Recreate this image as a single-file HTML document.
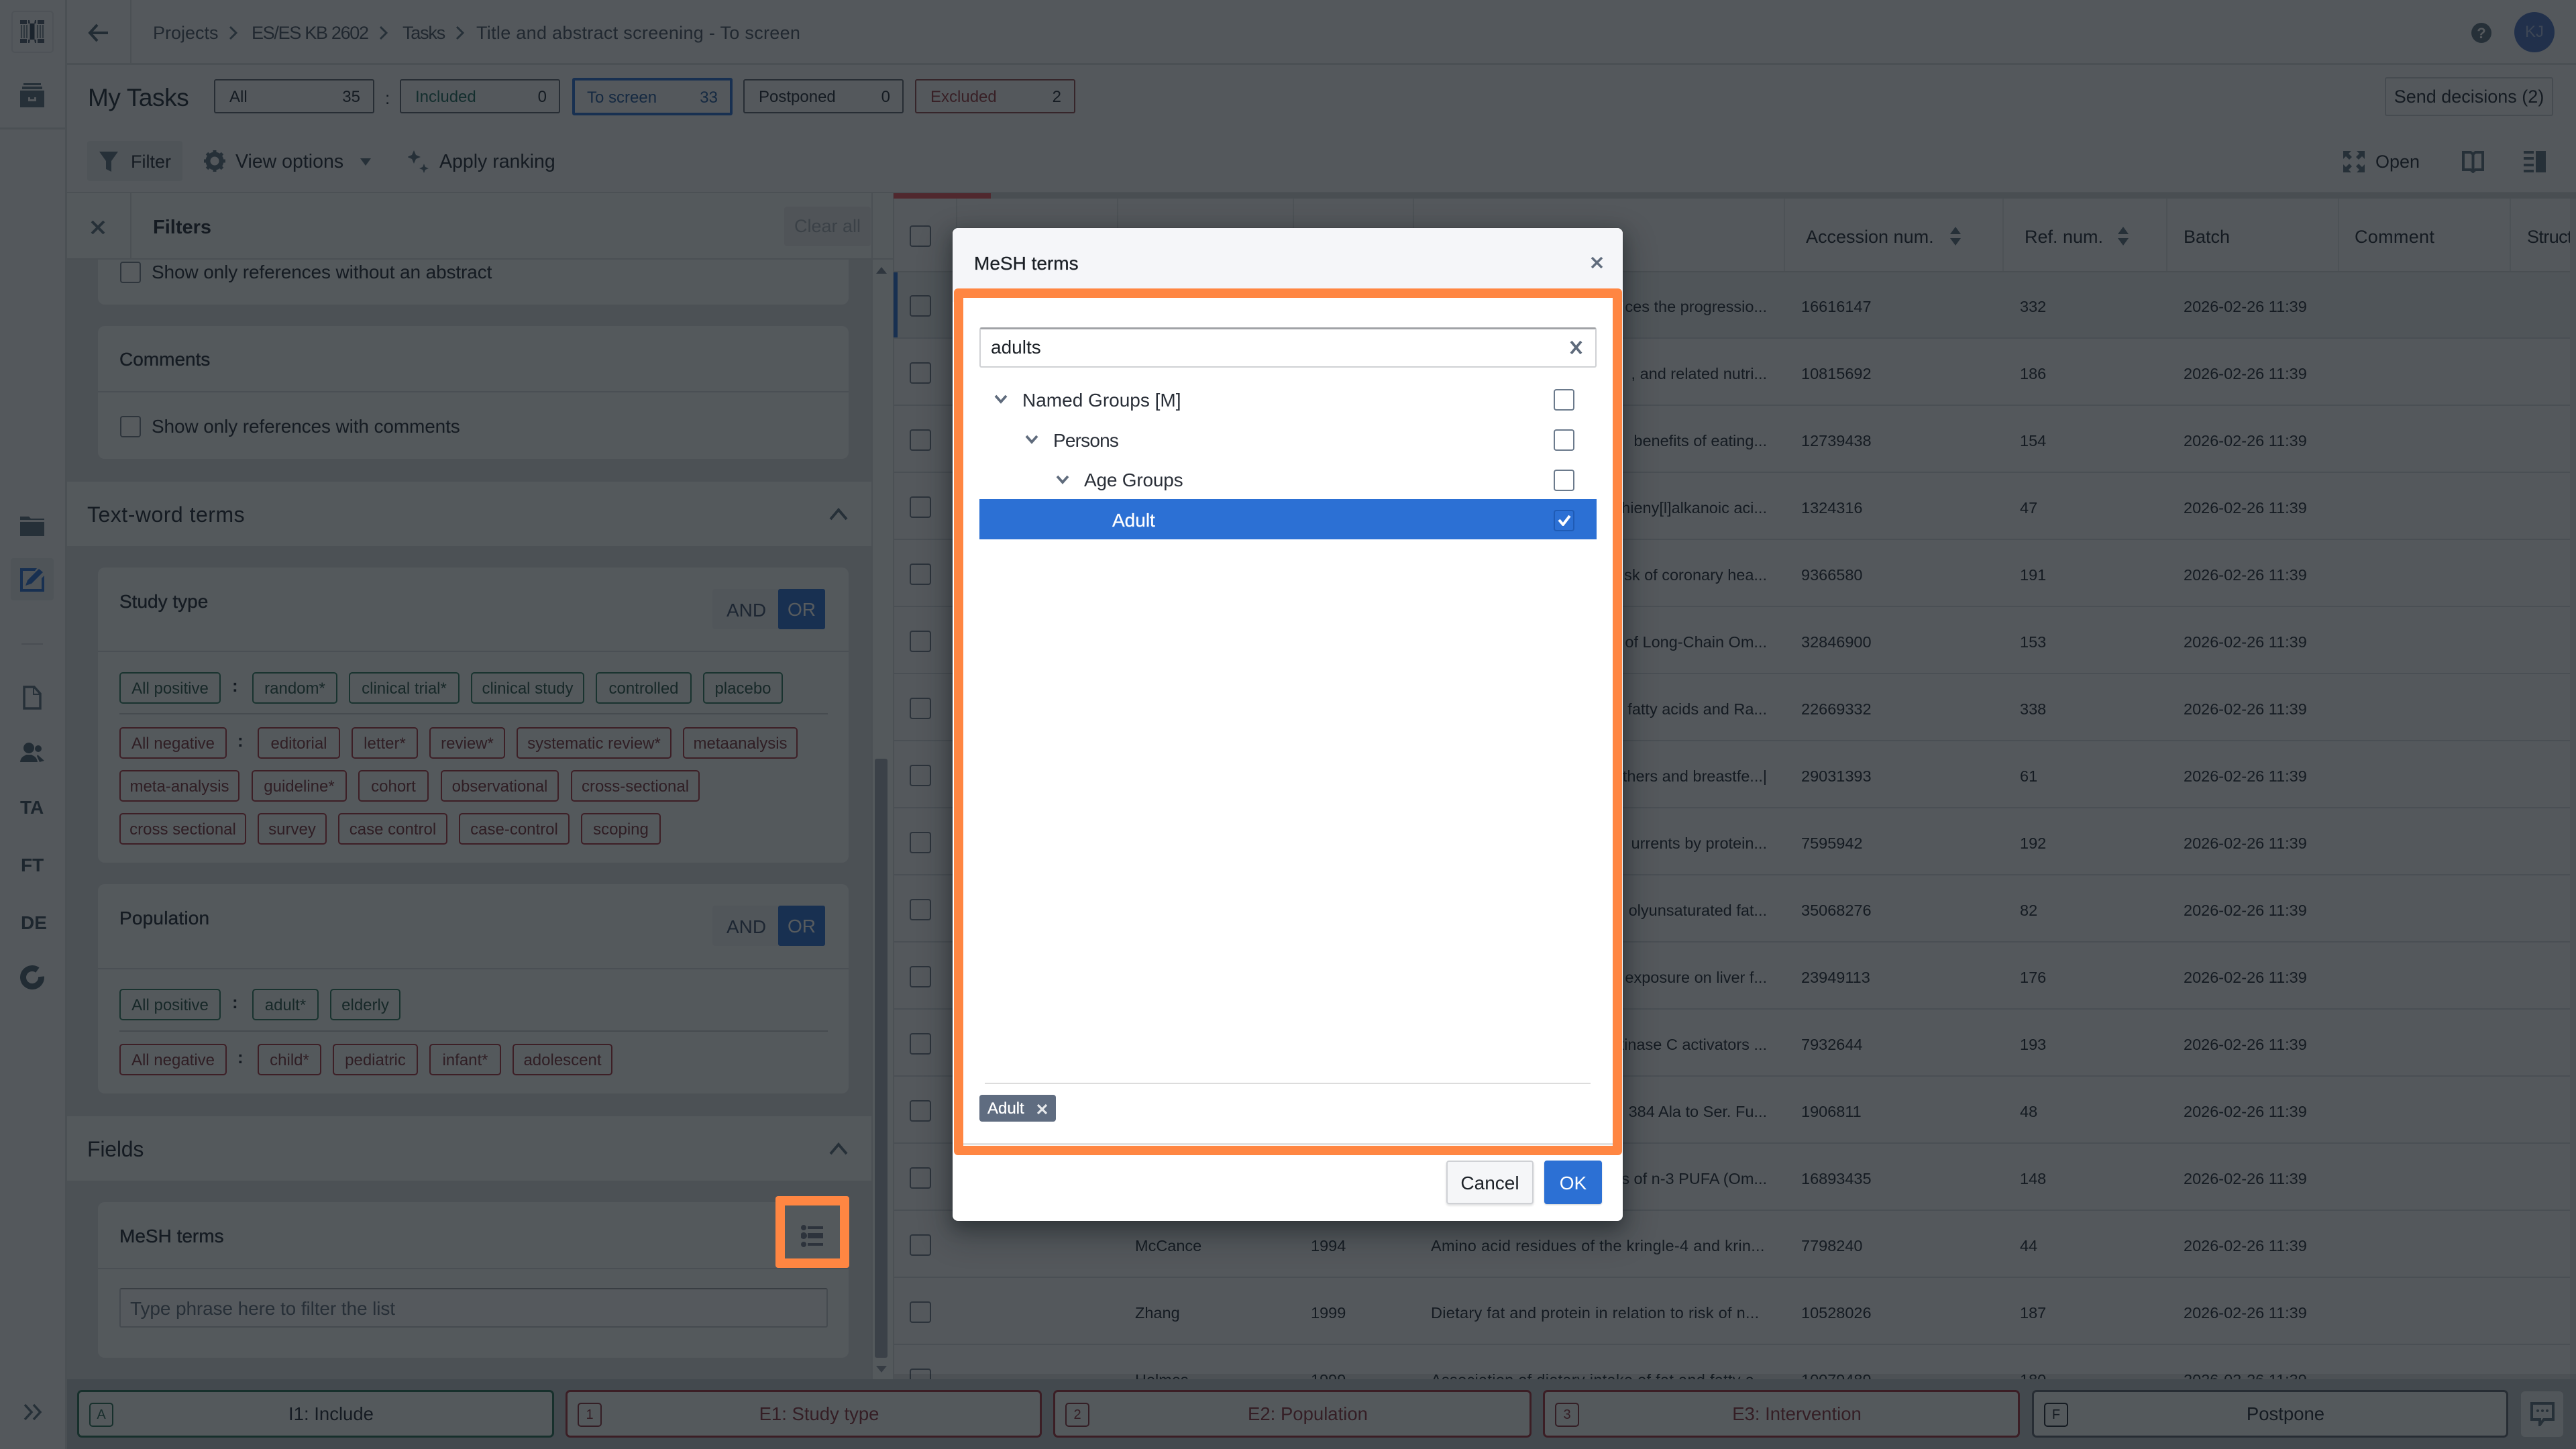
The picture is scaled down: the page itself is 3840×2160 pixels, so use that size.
<!DOCTYPE html>
<html lang="en"><head><meta charset="utf-8"><title>MeSH terms</title>
<style>
html,body{margin:0;padding:0;width:3840px;height:2160px;overflow:hidden;background:#f4f5f7}
*{box-sizing:border-box}
body{font-family:"Liberation Sans",Arial,sans-serif;color:#222b38;font-size:28px;position:relative}
.x,.t,.tag,.b,.cb,svg{position:absolute}
.t{white-space:nowrap;height:40px;line-height:40px}
.s{-webkit-text-stroke:.35px currentColor}
.tag{height:47px;margin-top:2px;line-height:45px;border:2px solid;border-radius:5px;text-align:center;font-size:24px;white-space:nowrap}
.p{border-color:#2f7a62;color:#2a544c}.n{border-color:#a83644;color:#78323e}
.cb{width:31px;height:32px;border:2px solid #6b7a8c;border-radius:4px;background:#fff}
.card{position:absolute;left:146px;width:1119px;background:#f6f7f9;border-radius:10px}
.line{position:absolute;background:#d4d7dc}
.tab{position:absolute;top:118px;height:51px;width:239px;border:2px solid #5f6672;border-radius:3px;font-size:24px;line-height:50px}
.tab span{position:absolute}
.r{position:absolute;left:1332px;width:2499px;height:100px;border-bottom:2px solid #d4d8dc;font-size:23.5px;line-height:104px;white-space:nowrap}
.r span{position:absolute;top:0}
.r i{position:absolute;left:24px;top:35px;width:32px;height:32px;border:2px solid #6f7a89;border-radius:4px}
.a{left:1353px}.f{left:1679px}.sn{right:1197px;text-align:right}.ti{left:801px;letter-spacing:.3px}.au{left:360px}.ye{left:622px}
.b{top:2072px;height:71px;border:3px solid;border-radius:7px;background:#f6f7f9;text-align:center;line-height:65px;font-size:27.5px;padding-left:46px}
.b u{position:absolute;text-decoration:none;left:15px;top:16px;width:36px;height:36px;border:2px solid;border-radius:5px;font-size:20px;line-height:32px;padding:0;text-align:center}
.th{position:absolute;top:296px;height:109px;width:2px;background:#dcdfe3}
.hd{font-size:27px}
</style></head><body>

<!-- app chrome -->
<div class="x" style="left:97px;top:0;width:3px;height:2160px;background:#d6d9de"></div>
<div class="x" style="left:97px;top:94px;width:3743px;height:3px;background:#d6d9de"></div>
<div class="x" style="left:194px;top:0;width:2px;height:95px;background:#d6d9de"></div>
<div class="x" style="left:0;top:190px;width:97px;height:3px;background:#d6d9de"></div>
<div class="x" style="left:17px;top:16px;width:63px;height:63px;border:2px solid #dfe2e6;border-radius:5px"></div>
<svg style="left:30px;top:29px" width="36" height="36" viewBox="0 0 36 36"><path d="M0 1h10v6H0zM26 1h10v6H26zM0 29h10v6H0zM26 29h10v6H26zM12 1h2l1 5h-3zM22 1h2v5h-3zM12 35h2l1-5h-3zM22 35h2v-5h-3z" fill="#4f5d6e"/><rect x="14.500" y="6" width="7" height="24" fill="#36465a"/><path d="M2 8v20M6 8v20M10 8v20M26 8v20M30 8v20M34 8v20" stroke="#7a8795" stroke-width="2.200"/></svg>
<svg style="left:30px;top:124px" width="36" height="36" viewBox="0 0 36 36" fill="#5c7080"><rect x="5" y="0" width="26" height="3"/><rect x="3" y="5" width="30" height="4"/><path d="M0 11h36v25H0zM12 21v6h12v-6h-3v3h-6v-3z"/></svg>
<svg style="left:30px;top:770px" width="36" height="29" viewBox="0 0 36 29" fill="#5c7080"><path d="M0 0h13l3 3h20v2H0zM0 8h36v21H0z"/></svg>
<div class="x" style="left:16px;top:832px;width:64px;height:63px;background:#e4e7ec;border-radius:4px"></div>
<svg style="left:30px;top:846px" width="36" height="36" viewBox="0 0 36 36"><path d="M0 1h25l-3 4H4v27h28V16l4-4v24H0z" fill="#2c70d4"/><path d="M8 27l3-8L28 2l6 5-17 17z" fill="#2c70d4"/></svg>
<div class="x" style="left:32px;top:959px;width:32px;height:2px;background:#d0d4d9"></div>
<svg style="left:34px;top:1022px" width="28" height="36" viewBox="0 0 28 36" fill="none" stroke="#5c7080" stroke-width="3.500"><path d="M2 2h15l9 10v22H2z"/><path d="M16 2v11h10" stroke-width="2"/></svg>
<svg style="left:30px;top:1107px" width="36" height="29" viewBox="0 0 36 29" fill="#4f6273"><circle cx="13" cy="8" r="8"/><path d="M0 29c1-8 6-9 9-11h8c3 2 8 3 9 11z"/><circle cx="27" cy="9" r="5"/><path d="M26 18l10 9-7 2-4-9z"/></svg>
<div class="t" style="left:30px;top:1184px;font-size:28px;font-weight:700;color:#3f4f60">TA</div>
<div class="t" style="left:31px;top:1270px;font-size:28px;font-weight:700;color:#3f4f60">FT</div>
<div class="t" style="left:31px;top:1356px;font-size:28px;font-weight:700;color:#3f4f60">DE</div>
<svg style="left:30px;top:1439px" width="36" height="36" viewBox="0 0 36 36" fill="none"><circle cx="18" cy="18" r="13.500" stroke="#4f6273" stroke-width="9" stroke-dasharray="73 12" transform="rotate(-5 18 18)"/></svg>
<svg style="left:35px;top:2092px" width="28" height="26" viewBox="0 0 28 26" fill="none" stroke="#5c7080" stroke-width="3.500"><path d="M2 2l10 11L2 24M15 2l10 11-10 11"/></svg>

<!-- breadcrumbs -->
<svg style="left:131px;top:35px" width="30" height="28" viewBox="0 0 30 28" fill="none" stroke="#4f6273" stroke-width="4"><path d="M14 2L3 14l11 12M3 14h27"/></svg>
<div class="t" style="left:228px;top:29px;font-size:27px;color:#4a5666">Projects</div>
<div class="t" style="left:375px;top:29px;font-size:27px;color:#4a5666;letter-spacing:-1.300px">ES/ES KB 2602</div>
<div class="t" style="left:600px;top:29px;font-size:27px;color:#4a5666;letter-spacing:-1.200px">Tasks</div>
<div class="t" style="left:710px;top:29px;font-size:27px;color:#4a5666;letter-spacing:.3px">Title and abstract screening - To screen</div>
<svg style="left:341px;top:38px" width="14" height="22" viewBox="0 0 14 22" fill="none" stroke="#5c7080" stroke-width="3"><path d="M2 2l9 9-9 9"/></svg>
<svg style="left:565px;top:38px" width="14" height="22" viewBox="0 0 14 22" fill="none" stroke="#5c7080" stroke-width="3"><path d="M2 2l9 9-9 9"/></svg>
<svg style="left:679px;top:38px" width="14" height="22" viewBox="0 0 14 22" fill="none" stroke="#5c7080" stroke-width="3"><path d="M2 2l9 9-9 9"/></svg>
<svg style="left:3684px;top:34px" width="30" height="30" viewBox="0 0 30 30"><circle cx="15" cy="15" r="15" fill="#5c7080"/><text x="15" y="23" text-anchor="middle" font-size="22" font-weight="700" fill="#f4f5f7" font-family="Liberation Sans">?</text></svg>
<div class="x" style="left:3748px;top:18px;width:60px;height:60px;border-radius:50%;background:#4a6fc0;color:#a8bae0;font-size:24px;line-height:60px;text-align:center">KJ</div>

<!-- tabs -->
<div class="t" style="left:131px;top:126px;font-size:37px;letter-spacing:-.4px;color:#1f2836">My Tasks</div>
<div class="tab" style="left:319px"><span style="left:21px">All</span><span style="right:19px">35</span></div>
<div class="t" style="left:574px;top:126px;font-size:26px">:</div>
<div class="tab" style="left:596px;color:#1f6a60"><span style="left:21px">Included</span><span style="right:18px;color:#222b38">0</span></div>
<div class="tab" style="left:853px;top:116px;height:56px;border:4px solid #2c70d4;line-height:52px;color:#22589f"><span style="left:18px">To screen</span><span style="right:18px">33</span></div>
<div class="tab" style="left:1108px"><span style="left:21px">Postponed</span><span style="right:18px">0</span></div>
<div class="tab" style="left:1364px;border-color:#8f4a52;color:#963a45"><span style="left:21px">Excluded</span><span style="right:19px;color:#222b38">2</span></div>
<div class="x" style="left:3555px;top:115px;width:251px;height:58px;border:2px solid #c6cad0;border-radius:3px;font-size:27px;line-height:54px;text-align:center">Send decisions (2)</div>

<!-- toolbar -->
<div class="x" style="left:130px;top:210px;width:142px;height:60px;background:#e4e6ea;border-radius:4px"></div>
<svg style="left:148px;top:226px" width="28" height="30" viewBox="0 0 28 30" fill="#5c7080"><path d="M0 0h28L18 14v16l-8-4V14z"/></svg>
<div class="t" style="left:195px;top:221px;font-size:27px">Filter</div>
<svg style="left:304px;top:224px" width="32" height="32" viewBox="0 0 32 32"><circle cx="16" cy="16" r="10" fill="none" stroke="#5c7080" stroke-width="7"/><path d="M16 0v6M16 26v6M0 16h6M26 16h6M4.500 4.500l4 4M23.500 23.500l4 4M4.500 27.500l4-4M23.500 8.500l4-4" stroke="#5c7080" stroke-width="5"/></svg>
<div class="t" style="left:351px;top:221px;font-size:28.500px">View options</div>
<svg style="left:537px;top:236px" width="16" height="11" viewBox="0 0 16 11" fill="#5c7080"><path d="M0 0h16L8 11z"/></svg>
<svg style="left:608px;top:224px" width="32" height="34" viewBox="0 0 32 34" fill="#5c7080"><path d="M9 0l3 7 7 3-7 3-3 7-3-7-7-3 7-3zM24 20l2 5 5 2-5 2-2 5-2-5-5-2 5-2z"/></svg>
<div class="t" style="left:655px;top:221px;font-size:28.500px">Apply ranking</div>
<svg style="left:3493px;top:225px" width="32" height="32" viewBox="0 0 32 32" fill="#5c7080"><path d="M0 0h12L8 4l5 5-4 4-5-5-4 4zM32 0v12l-4-4-5 5-4-4 5-5-4-4zM0 32V20l4 4 5-5 4 4-5 5 4 4zM32 32H20l4-4-5-5 4-4 5 5 4-4z"/></svg>
<div class="t" style="left:3541px;top:221px;font-size:27px">Open</div>
<svg style="left:3670px;top:224px" width="33" height="34" viewBox="0 0 33 34" fill="none" stroke="#5c7080" stroke-width="4"><path d="M2 3h11l3.500 3 3.500-3h11v26H20l-3.500 3-3.500-3H2zM16.500 6v24"/></svg>
<svg style="left:3762px;top:225px" width="33" height="32" viewBox="0 0 33 32" fill="#5c7080"><rect x="18" y="0" width="15" height="32"/><rect x="0" y="0" width="15" height="4"/><rect x="0" y="9" width="15" height="4"/><rect x="0" y="19" width="15" height="4"/><rect x="0" y="28" width="15" height="4"/></svg>
<div class="x" style="left:97px;top:286px;width:3743px;height:2px;background:#d6d9de"></div>

<!-- left panel -->
<div class="x" style="left:100px;top:387px;width:1199px;height:1669px;background:#d9dce1"></div>
<div class="card" style="top:370px;height:84px;border-radius:0 0 10px 10px"></div>
<div class="x" style="left:100px;top:288px;width:1232px;height:99px;background:#f6f7f9;border-bottom:2px solid #d6d9de"></div>
<div class="x" style="left:194px;top:288px;width:2px;height:98px;background:#d6d9de"></div>
<svg style="left:135px;top:329px" width="22" height="20" viewBox="0 0 22 20" fill="none" stroke="#5c7080" stroke-width="4"><path d="M2 1l18 18M20 1L2 19"/></svg>
<div class="t" style="left:228px;top:319px;font-size:29px;font-weight:700">Filters</div>
<div class="x" style="left:1169px;top:308px;width:129px;height:59px;background:#e6e8eb;border-radius:4px;color:#a2a9b2;font-size:27px;line-height:59px;text-align:center">Clear all</div>

<div class="cb" style="left:179px;top:390px;border-color:#757f8c;background:#fff"></div>
<div class="t" style="left:226px;top:386px;letter-spacing:-.12px">Show only references without an abstract</div>

<div class="card" style="top:486px;height:198px"></div>
<div class="line" style="left:146px;top:583px;width:1119px;height:2px"></div>
<div class="t s" style="left:178px;top:516px">Comments</div>
<div class="cb" style="left:179px;top:620px;border-color:#757f8c"></div>
<div class="t" style="left:226px;top:616px;letter-spacing:-.12px">Show only references with comments</div>

<div class="x" style="left:100px;top:718px;width:1199px;height:96px;background:#f6f7f9"></div>
<div class="t" style="left:130px;top:747px;font-size:32px;letter-spacing:.5px">Text-word terms</div>
<svg style="left:1236px;top:756px" width="28" height="20" viewBox="0 0 28 20" fill="none" stroke="#5c7080" stroke-width="4"><path d="M2 18L14 4l12 14"/></svg>

<div class="card" style="top:846px;height:440px"></div>
<div class="t s" style="left:178px;top:877px">Study type</div>
<div class="x" style="left:1062px;top:878px;width:168px;height:60px;background:#eceef1;border-radius:4px"></div>
<div class="t" style="left:1083px;top:890px;color:#3f4f6c">AND</div>
<div class="x" style="left:1160px;top:878px;width:70px;height:60px;background:#2c70d4;border-radius:3px;color:#fff;line-height:62px;text-align:center">OR</div>
<div class="line" style="left:146px;top:970px;width:1119px;height:2px"></div>
<div class="tag p" style="left:178px;top:1000px;width:151px">All positive</div>
<div class="t" style="left:346px;top:1002px;font-size:26px;font-weight:700">:</div>
<div class="tag p" style="left:376px;top:1000px;width:127px">random*</div>
<div class="tag p" style="left:520px;top:1000px;width:165px">clinical trial*</div>
<div class="tag p" style="left:702px;top:1000px;width:169px">clinical study</div>
<div class="tag p" style="left:888px;top:1000px;width:143px">controlled</div>
<div class="tag p" style="left:1048px;top:1000px;width:119px">placebo</div>
<div class="line" style="left:178px;top:1063px;width:1056px;height:2px;background:#c6cace"></div>
<div class="tag n" style="left:178px;top:1082px;width:160px">All negative</div>
<div class="t" style="left:354px;top:1084px;font-size:26px;font-weight:700">:</div>
<div class="tag n" style="left:384px;top:1082px;width:123px">editorial</div>
<div class="tag n" style="left:524px;top:1082px;width:99px">letter*</div>
<div class="tag n" style="left:640px;top:1082px;width:113px">review*</div>
<div class="tag n" style="left:770px;top:1082px;width:231px">systematic review*</div>
<div class="tag n" style="left:1018px;top:1082px;width:171px">metaanalysis</div>
<div class="tag n" style="left:178px;top:1146px;width:179px">meta-analysis</div>
<div class="tag n" style="left:375px;top:1146px;width:142px">guideline*</div>
<div class="tag n" style="left:534px;top:1146px;width:105px">cohort</div>
<div class="tag n" style="left:657px;top:1146px;width:176px">observational</div>
<div class="tag n" style="left:851px;top:1146px;width:192px">cross-sectional</div>
<div class="tag n" style="left:178px;top:1210px;width:189px">cross sectional</div>
<div class="tag n" style="left:384px;top:1210px;width:103px">survey</div>
<div class="tag n" style="left:504px;top:1210px;width:163px">case control</div>
<div class="tag n" style="left:684px;top:1210px;width:165px">case-control</div>
<div class="tag n" style="left:866px;top:1210px;width:119px">scoping</div>

<div class="card" style="top:1318px;height:312px"></div>
<div class="t s" style="left:178px;top:1349px;letter-spacing:.2px">Population</div>
<div class="x" style="left:1062px;top:1350px;width:168px;height:60px;background:#eceef1;border-radius:4px"></div>
<div class="t" style="left:1083px;top:1362px;color:#3f4f6c">AND</div>
<div class="x" style="left:1160px;top:1350px;width:70px;height:60px;background:#2c70d4;border-radius:3px;color:#fff;line-height:62px;text-align:center">OR</div>
<div class="line" style="left:146px;top:1443px;width:1119px;height:2px"></div>
<div class="tag p" style="left:178px;top:1472px;width:151px">All positive</div>
<div class="t" style="left:346px;top:1474px;font-size:26px;font-weight:700">:</div>
<div class="tag p" style="left:376px;top:1472px;width:99px">adult*</div>
<div class="tag p" style="left:492px;top:1472px;width:105px">elderly</div>
<div class="line" style="left:178px;top:1536px;width:1056px;height:2px;background:#c6cace"></div>
<div class="tag n" style="left:178px;top:1554px;width:160px">All negative</div>
<div class="t" style="left:354px;top:1556px;font-size:26px;font-weight:700">:</div>
<div class="tag n" style="left:384px;top:1554px;width:95px">child*</div>
<div class="tag n" style="left:496px;top:1554px;width:127px">pediatric</div>
<div class="tag n" style="left:640px;top:1554px;width:107px">infant*</div>
<div class="tag n" style="left:764px;top:1554px;width:149px">adolescent</div>

<div class="x" style="left:100px;top:1664px;width:1199px;height:96px;background:#f6f7f9"></div>
<div class="t" style="left:130px;top:1693px;font-size:32px;letter-spacing:-.2px">Fields</div>
<svg style="left:1236px;top:1702px" width="28" height="20" viewBox="0 0 28 20" fill="none" stroke="#5c7080" stroke-width="4"><path d="M2 18L14 4l12 14"/></svg>

<div class="card" style="top:1792px;height:232px"></div>
<div class="t s" style="left:178px;top:1823px">MeSH terms</div>
<div class="line" style="left:146px;top:1890px;width:1119px;height:2px"></div>
<div class="x" style="left:178px;top:1920px;width:1056px;height:59px;border:2px solid #c3c7cc;border-top-color:#9a9fa6;border-radius:3px;background:#f8f9fb"></div>
<div class="t" style="left:194px;top:1931px;color:#5f6b7c;letter-spacing:-.1px">Type phrase here to filter the list</div>

<!-- scrollbar -->
<div class="x" style="left:1299px;top:288px;width:2px;height:1768px;background:#d6d9de"></div>
<div class="x" style="left:1301px;top:387px;width:31px;height:1669px;background:#f6f7f9"></div>
<svg style="left:1306px;top:398px" width="16" height="10" viewBox="0 0 16 10" fill="#7b8494"><path d="M8 0l8 10H0z"/></svg>
<div class="x" style="left:1304px;top:1131px;width:19px;height:893px;background:#a0a7b4;border-radius:3px"></div>
<svg style="left:1306px;top:2036px" width="16" height="10" viewBox="0 0 16 10" fill="#8f97a3"><path d="M0 0h16L8 10z"/></svg>
<div class="x" style="left:1331px;top:288px;width:2px;height:1768px;background:#d6d9de"></div>

<!-- table -->
<div class="x" style="left:1333px;top:288px;width:2507px;height:8px;background:#cfd2d7"></div>
<div class="x" style="left:1332px;top:288px;width:145px;height:8px;background:#e6545f"></div>
<div class="x" style="left:1333px;top:405px;width:2498px;height:100px;background:#e8eaee"></div>
<div class="x" style="left:1332px;top:406px;width:6px;height:98px;background:#2c70d4"></div>
<div class="th" style="left:1425px"></div><div class="th" style="left:1665px"></div><div class="th" style="left:1927px"></div><div class="th" style="left:2106px"></div>
<div class="th" style="left:2659px"></div><div class="th" style="left:2985px"></div><div class="th" style="left:3229px"></div><div class="th" style="left:3485px"></div><div class="th" style="left:3741px"></div>
<div class="x" style="left:1333px;top:404px;width:2498px;height:2px;background:#d0d4d8"></div>
<div class="cb" style="left:1356px;top:336px;width:32px;background:none;border-color:#6f7a89"></div>
<div class="t hd" style="left:2692px;top:333px">Accession num.</div>
<svg style="left:2906px;top:338px" width="18" height="28" viewBox="0 0 18 28" fill="#5c7080"><path d="M9 0l8 11H1zM9 28L1 17h16z"/></svg>
<div class="t hd" style="left:3018px;top:333px">Ref. num.</div>
<svg style="left:3156px;top:338px" width="18" height="28" viewBox="0 0 18 28" fill="#5c7080"><path d="M9 0l8 11H1zM9 28L1 17h16z"/></svg>
<div class="t hd" style="left:3255px;top:333px">Batch</div>
<div class="t hd" style="left:3510px;top:333px;letter-spacing:.3px">Comment</div>
<div class="x" style="left:3741px;top:296px;width:90px;height:109px;overflow:hidden"><div class="t hd" style="left:26px;top:37px;letter-spacing:-.6px">Structured</div></div>

<div class="r" style="top:405px"><i></i><span class="sn">ces the progressio...</span><span class="a">16616147</span><span class="f">332</span><span style="left:1923px">2026-02-26 11:39</span></div>
<div class="r" style="top:505px"><i></i><span class="sn">, and related nutri...</span><span class="a">10815692</span><span class="f">186</span><span style="left:1923px">2026-02-26 11:39</span></div>
<div class="r" style="top:605px"><i></i><span class="sn">benefits of eating...</span><span class="a">12739438</span><span class="f">154</span><span style="left:1923px">2026-02-26 11:39</span></div>
<div class="r" style="top:705px"><i></i><span class="sn">thieny[l]alkanoic aci...</span><span class="a">1324316</span><span class="f">47</span><span style="left:1923px">2026-02-26 11:39</span></div>
<div class="r" style="top:805px"><i></i><span class="sn">sk of coronary hea...</span><span class="a">9366580</span><span class="f">191</span><span style="left:1923px">2026-02-26 11:39</span></div>
<div class="r" style="top:905px"><i></i><span class="sn">of Long-Chain Om...</span><span class="a">32846900</span><span class="f">153</span><span style="left:1923px">2026-02-26 11:39</span></div>
<div class="r" style="top:1005px"><i></i><span class="sn">fatty acids and Ra...</span><span class="a">22669332</span><span class="f">338</span><span style="left:1923px">2026-02-26 11:39</span></div>
<div class="r" style="top:1105px"><i></i><span class="sn">thers and breastfe...|</span><span class="a">29031393</span><span class="f">61</span><span style="left:1923px">2026-02-26 11:39</span></div>
<div class="r" style="top:1205px"><i></i><span class="sn">urrents by protein...</span><span class="a">7595942</span><span class="f">192</span><span style="left:1923px">2026-02-26 11:39</span></div>
<div class="r" style="top:1305px"><i></i><span class="sn">olyunsaturated fat...</span><span class="a">35068276</span><span class="f">82</span><span style="left:1923px">2026-02-26 11:39</span></div>
<div class="r" style="top:1405px"><i></i><span class="sn">exposure on liver f...</span><span class="a">23949113</span><span class="f">176</span><span style="left:1923px">2026-02-26 11:39</span></div>
<div class="r" style="top:1505px"><i></i><span class="sn">kinase C activators ...</span><span class="a">7932644</span><span class="f">193</span><span style="left:1923px">2026-02-26 11:39</span></div>
<div class="r" style="top:1605px"><i></i><span class="sn">384 Ala to Ser. Fu...</span><span class="a">1906811</span><span class="f">48</span><span style="left:1923px">2026-02-26 11:39</span></div>
<div class="r" style="top:1705px"><i></i><span class="sn">s of n-3 PUFA (Om...</span><span class="a">16893435</span><span class="f">148</span><span style="left:1923px">2026-02-26 11:39</span></div>
<div class="r" style="top:1805px"><i></i><span class="au">McCance</span><span class="ye">1994</span><span class="ti">Amino acid residues of the kringle-4 and krin...</span><span class="a">7798240</span><span class="f">44</span><span style="left:1923px">2026-02-26 11:39</span></div>
<div class="r" style="top:1905px"><i></i><span class="au">Zhang</span><span class="ye">1999</span><span class="ti">Dietary fat and protein in relation to risk of n...</span><span class="a">10528026</span><span class="f">187</span><span style="left:1923px">2026-02-26 11:39</span></div>
<div class="r" style="top:2005px"><i></i><span class="au">Holmes</span><span class="ye">1999</span><span class="ti">Association of dietary intake of fat and fatty a...</span><span class="a">10079489</span><span class="f">180</span><span style="left:1923px">2026-02-26 11:39</span></div>
<div class="x" style="left:3831px;top:296px;width:9px;height:1760px;background:#e4e6ea"></div>
<div class="x" style="left:1333px;top:2048px;width:2507px;height:8px;background:rgba(16,22,26,.1)"></div>

<!-- bottom bar -->
<div class="x" style="left:100px;top:2056px;width:3740px;height:104px;background:#bdc3c9"></div>
<div class="b" style="left:115px;width:711px;border-color:#2a6e58"><u style="border-color:#2a6e58;color:#2f6a5a">A</u>I1: Include</div>
<div class="b" style="left:843px;width:710px;border-color:#a03442;color:#8a3440"><u>1</u>E1: Study type</div>
<div class="b" style="left:1570px;width:713px;border-color:#a03442;color:#8a3440"><u>2</u>E2: Population</div>
<div class="b" style="left:2300px;width:711px;border-color:#a03442;color:#8a3440"><u>3</u>E3: Intervention</div>
<div class="b" style="left:3029px;width:710px;border-color:#5f6672"><u>F</u>Postpone</div>
<div class="x" style="left:3758px;top:2074px;width:63px;height:68px;background:#eceef1;border-radius:6px"></div>
<svg style="left:3772px;top:2090px" width="36" height="36" viewBox="0 0 36 36"><path d="M2 2h32v24H20l-6 8v-8H2z" fill="none" stroke="#5c7080" stroke-width="4"/><circle cx="11" cy="13" r="2" fill="#5c7080"/><circle cx="18" cy="13" r="2" fill="#5c7080"/><circle cx="25" cy="13" r="2" fill="#5c7080"/></svg>

<!-- backdrop -->
<div class="x" style="left:0;top:0;width:3840px;height:2160px;background:rgba(16,22,26,.7)"></div>

<!-- modal -->
<div class="x" style="left:1420px;top:340px;width:999px;height:1480px;background:#fff;border-radius:8px;box-shadow:0 0 0 1px rgba(16,22,26,.1),0 8px 24px rgba(16,22,26,.35),0 18px 46px 6px rgba(16,22,26,.3)"></div>
<div class="x" style="left:1420px;top:340px;width:999px;height:110px;background:#f5f6f9;border-radius:8px 8px 0 0"></div>
<div class="t" style="left:1452px;top:373px;color:#1c2127;-webkit-text-stroke:.3px #1c2127">MeSH terms</div>
<svg style="left:2371px;top:383px" width="19" height="17" viewBox="0 0 19 17" fill="none" stroke="#5f6b7c" stroke-width="3.500"><path d="M2 1l15 15M17 1L2 16"/></svg>

<div class="x" style="left:1436px;top:444px;width:968px;height:1264px;background:#fff"></div>
<div class="x" style="left:1460px;top:488px;width:920px;height:60px;border:2px solid #cfd1d4;border-top:3px solid #a0a2a6;border-radius:3px;background:#fff"></div>
<div class="t" style="left:1477px;top:498px;color:#1c2127">adults</div>
<svg style="left:2340px;top:508px" width="19" height="20" viewBox="0 0 19 20" fill="none" stroke="#5f6b7c" stroke-width="3.800"><path d="M2 1l15 18M17 1L2 19"/></svg>

<svg style="left:1482px;top:588px" width="20" height="14" viewBox="0 0 20 14" fill="none" stroke="#5f6b7c" stroke-width="3.800"><path d="M2 2l8 9 8-9"/></svg>
<div class="t" style="left:1524px;top:577px;color:#2a2f38">Named Groups [M]</div>
<div class="cb" style="left:2316px;top:580px"></div>
<svg style="left:1528px;top:648px" width="20" height="14" viewBox="0 0 20 14" fill="none" stroke="#5f6b7c" stroke-width="3.800"><path d="M2 2l8 9 8-9"/></svg>
<div class="t" style="left:1570px;top:637px;color:#2a2f38;letter-spacing:-.8px">Persons</div>
<div class="cb" style="left:2316px;top:640px"></div>
<svg style="left:1574px;top:708px" width="20" height="14" viewBox="0 0 20 14" fill="none" stroke="#5f6b7c" stroke-width="3.800"><path d="M2 2l8 9 8-9"/></svg>
<div class="t" style="left:1616px;top:696px;color:#2a2f38;letter-spacing:-.2px">Age Groups</div>
<div class="cb" style="left:2316px;top:700px"></div>
<div class="x" style="left:1460px;top:744px;width:920px;height:60px;background:#2c70d4"></div>
<div class="t" style="left:1658px;top:756px;color:#fff;-webkit-text-stroke:.3px #fff">Adult</div>
<div class="cb" style="left:2316px;top:760px;background:#2c70d4;border-color:#1f5bb5"></div>
<svg style="left:2322px;top:768px" width="20" height="16" viewBox="0 0 20 16" fill="none" stroke="#fff" stroke-width="4"><path d="M2 7l6 7L18 1"/></svg>

<div class="x" style="left:1468px;top:1614px;width:903px;height:2px;background:#dcdcdc"></div>
<div class="x" style="left:1460px;top:1632px;width:114px;height:40px;background:#5f6c80;border-radius:4px"></div>
<div class="t" style="left:1472px;top:1633px;color:#fff;font-size:24px;-webkit-text-stroke:.3px #fff">Adult</div>
<svg style="left:1545px;top:1646px" width="17" height="15" viewBox="0 0 17 15" fill="none" stroke="#e6e8eb" stroke-width="3.200"><path d="M2 1l13 13M15 1L2 14"/></svg>
<div class="x" style="left:1436px;top:1704px;width:968px;height:3px;background:#e2e2e2"></div>

<!-- highlight boxes -->
<div class="x" style="left:1422px;top:430px;width:996px;height:1292px;border:14px solid #ff8642;border-radius:6px"></div>
<div class="x" style="left:1156px;top:1783px;width:110px;height:107px;border:14px solid #ff8642;border-radius:4px"></div>
<svg style="left:1194px;top:1825px" width="33" height="35" viewBox="0 0 33 35" fill="#2d333c"><circle cx="4" cy="5" r="4"/><rect x="10" y="3" width="23" height="4"/><circle cx="4" cy="17" r="5"/><rect x="10" y="13" width="23" height="8"/><circle cx="4" cy="30" r="4"/><rect x="10" y="28" width="23" height="4"/></svg>

<!-- footer -->
<div class="x" style="left:2156px;top:1730px;width:130px;height:65px;background:#f5f6f8;border:2px solid #cfd1d5;border-radius:4px;box-shadow:0 2px 3px rgba(16,22,26,.15);color:#1c2127;line-height:64px;text-align:center">Cancel</div>
<div class="x" style="left:2302px;top:1730px;width:86px;height:65px;background:#2c70d4;border-radius:4px;color:#fff;line-height:67px;text-align:center;box-shadow:0 1px 2px rgba(16,22,26,.2)">OK</div>

</body></html>
